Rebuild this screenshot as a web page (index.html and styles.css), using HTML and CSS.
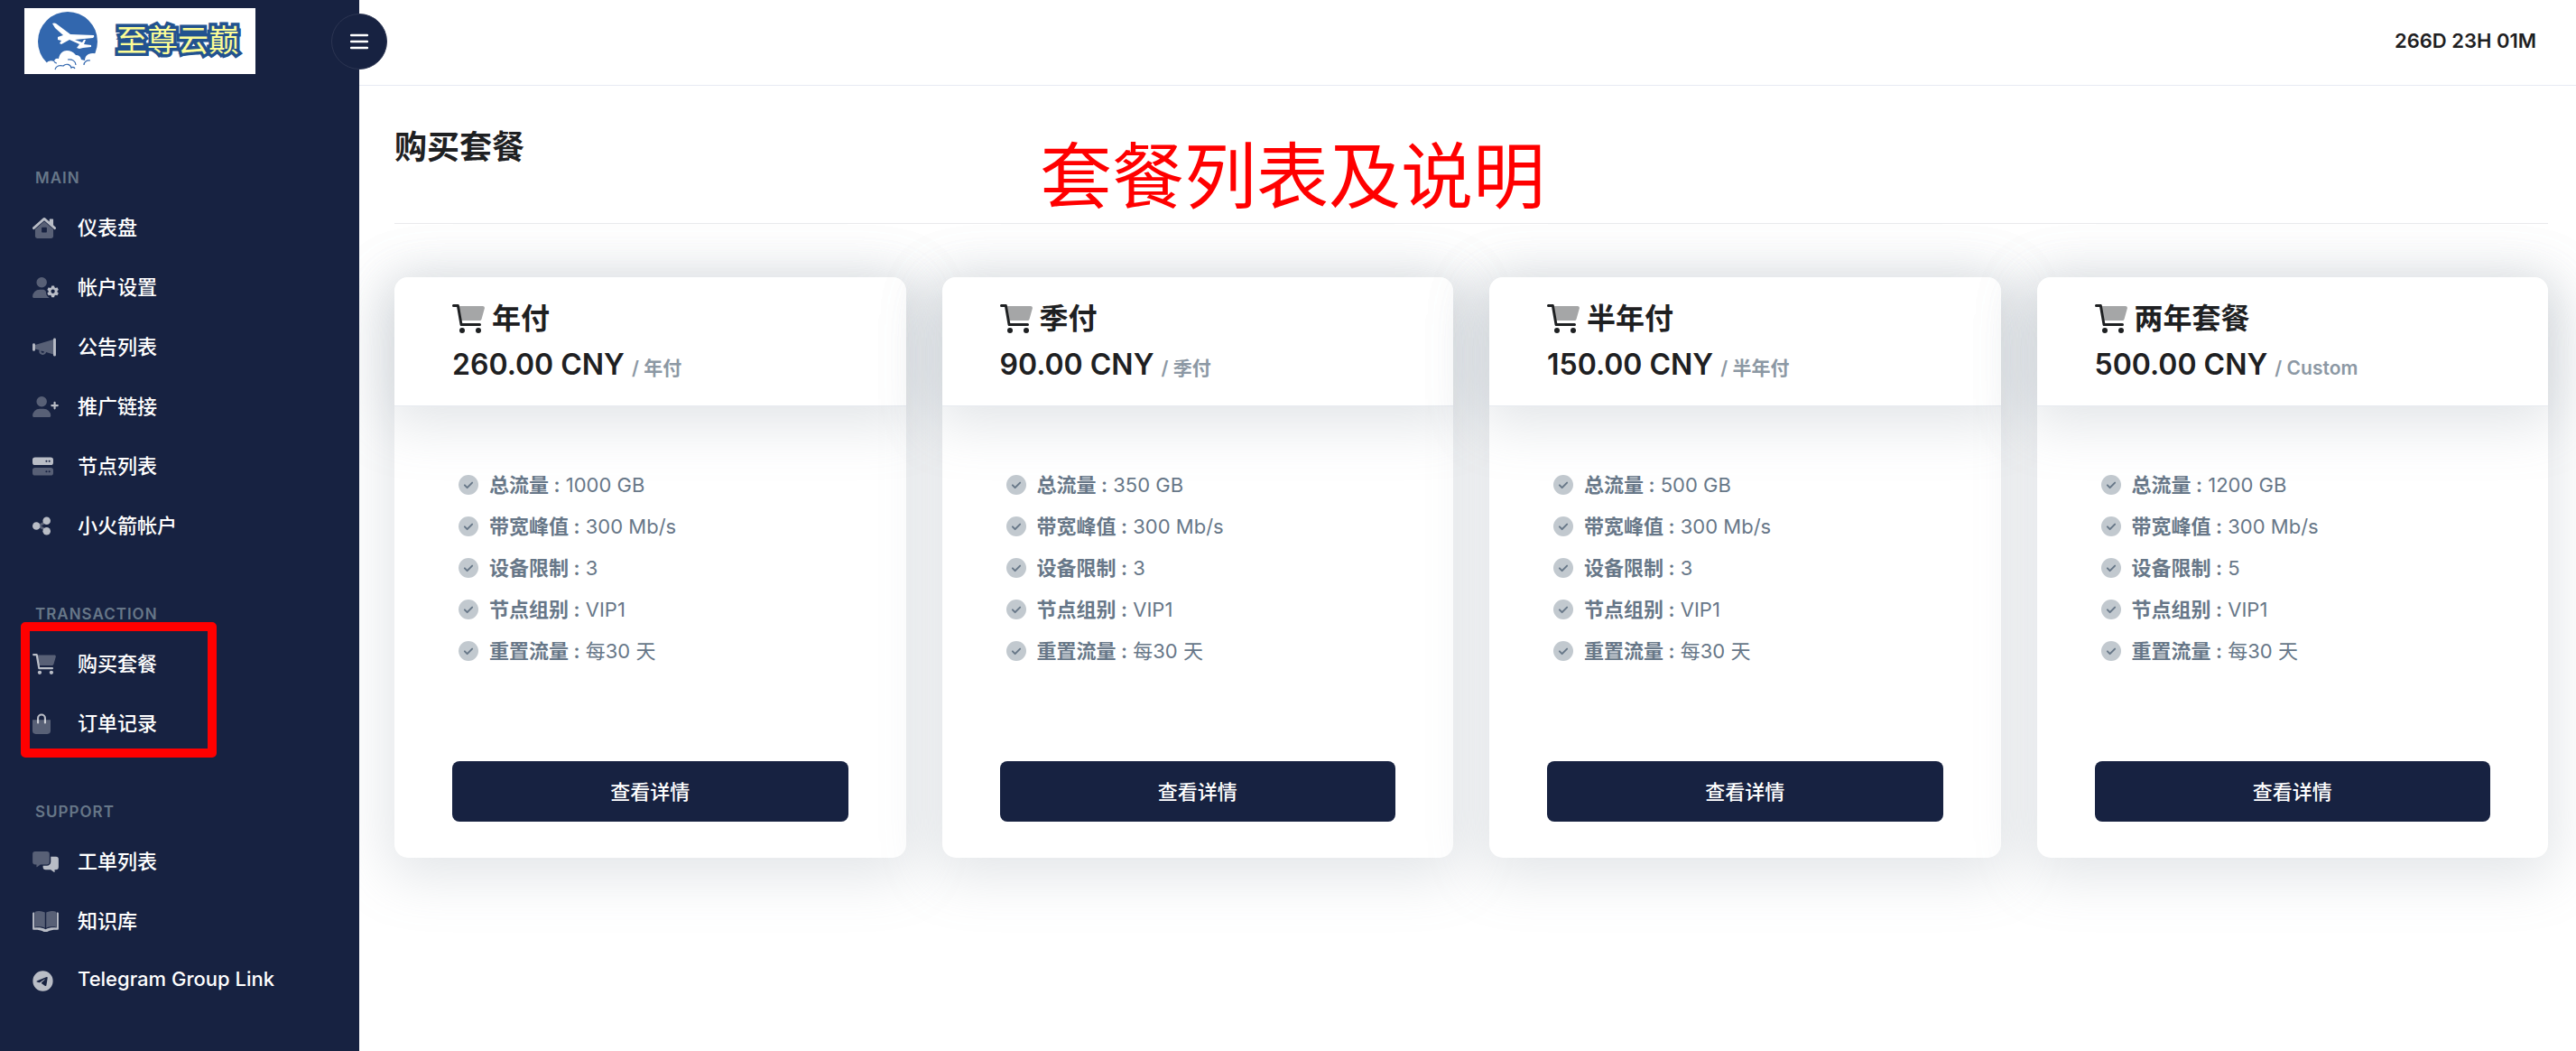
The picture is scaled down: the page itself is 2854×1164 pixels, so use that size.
FILE: index.html
```html
<!DOCTYPE html>
<html lang="zh-CN">
<head>
    <meta charset="UTF-8">
    <meta name="viewport" content="width=device-width, initial-scale=1.0">
    <title>购买套餐</title>
    <link rel="stylesheet" href="styles.css">
</head>
<body>
    <!-- Icon sprite -->
    <svg class="sprite" aria-hidden="true">
        <symbol id="i-home" viewBox="0 0 576 512">
            <path opacity=".4" fill-rule="evenodd" d="M64 290 288 96l224 194v174a48 48 0 0 1-48 48H112a48 48 0 0 1-48-48zM224 256v96a16 16 0 0 0 16 16h96a16 16 0 0 0 16-16v-96a16 16 0 0 0-16-16h-96a16 16 0 0 0-16 16z"/>
            <path d="M512 185V48a16 16 0 0 0-16-16h-64a16 16 0 0 0-16 16v52L309 8a32 32 0 0 0-42 0L11 232a32 32 0 1 0 42 48L288 75l235 205a32 32 0 1 0 42-48z"/>
        </symbol>
        <symbol id="i-user-gear" viewBox="0 0 640 512">
            <path opacity=".4" d="M224 256a128 128 0 1 0 0-256 128 128 0 0 0 0 256zM325 345a110 110 0 0 0-52-41h-98A174 174 0 0 0 0 478c0 19 15 34 34 34h380a190 190 0 0 1-75-86z"/>
            <path fill-rule="evenodd" d="m468 210-8 39-29 17-38-13-32 56 30 26v34l-30 26 32 56 38-13 29 17 8 39h65l8-39 29-17 38 13 32-56-30-26v-34l30-26-32-56-38 13-29-17-8-39zm32 92a48 48 0 1 1 0 96 48 48 0 0 1 0-96z"/>
        </symbol>
        <symbol id="i-horn" viewBox="0 0 576 512">
            <path opacity=".4" fill-rule="evenodd" d="M64 198 512 64v368L337 380a88 88 0 1 1-170-50L64 300zM212 344a40 40 0 1 0 78 22z"/>
            <path d="M544 32a32 32 0 0 0-32 32v384a32 32 0 1 0 64 0V64a32 32 0 0 0-32-32zM32 160a32 32 0 0 0-32 32v128a32 32 0 1 0 64 0V192a32 32 0 0 0-32-32z"/>
        </symbol>
        <symbol id="i-user-plus" viewBox="0 0 640 512">
            <path opacity=".4" d="M224 256a128 128 0 1 0 0-256 128 128 0 0 0 0 256zM273 304h-98A174 174 0 0 0 0 478c0 19 15 34 34 34h380c19 0 34-15 34-34a174 174 0 0 0-175-174z"/>
            <path d="M616 200h-48v-48a24 24 0 1 0-48 0v48h-48a24 24 0 1 0 0 48h48v48a24 24 0 1 0 48 0v-48h48a24 24 0 1 0 0-48z"/>
        </symbol>
        <symbol id="i-server" viewBox="0 0 512 512">
            <path fill-rule="evenodd" d="M64 32h384a64 64 0 0 1 64 64v64a64 64 0 0 1-64 64H64a64 64 0 0 1-64-64V96a64 64 0 0 1 64-64zm280 72a24 24 0 1 0 0 48 24 24 0 0 0 0-48zm72 0a24 24 0 1 0 0 48 24 24 0 0 0 0-48z"/>
            <path opacity=".4" fill-rule="evenodd" d="M64 288h384a64 64 0 0 1 64 64v64a64 64 0 0 1-64 64H64a64 64 0 0 1-64-64v-64a64 64 0 0 1 64-64zm280 72a24 24 0 1 0 0 48 24 24 0 0 0 0-48zm72 0a24 24 0 1 0 0 48 24 24 0 0 0 0-48z"/>
        </symbol>
        <symbol id="i-share" viewBox="0 0 448 512">
            <path opacity=".4" d="m176 203 94-47 28 57-94 47zM204 252l94 47-28 57-94-47z"/>
            <circle cx="96" cy="256" r="96"/>
            <circle cx="352" cy="128" r="96"/>
            <circle cx="352" cy="384" r="96"/>
        </symbol>
        <symbol id="i-cart" viewBox="0 0 576 512">
            <path opacity=".4" d="M110 32h432c20 0 37 19 32 40l-54 192a32 32 0 0 1-31 24H159z"/>
            <path d="M0 24C0 11 11 0 24 0h78c11 0 21 8 23 19l55 317h308a24 24 0 1 1 0 48H160c-11 0-21-8-23-20L82 48H24A24 24 0 0 1 0 24z"/>
            <circle cx="176" cy="464" r="48"/>
            <circle cx="464" cy="464" r="48"/>
        </symbol>
        <symbol id="i-bag" viewBox="0 0 448 512">
            <path opacity=".4" d="M0 160h448v272a80 80 0 0 1-80 80H80a80 80 0 0 1-80-80z"/>
            <path d="M112 232v-112a112 112 0 0 1 224 0v112a24 24 0 0 1-48 0v-112a64 64 0 0 0-128 0v112a24 24 0 0 1-48 0z"/>
        </symbol>
        <symbol id="i-comments" viewBox="0 0 640 512">
            <path opacity=".4" d="M352 0H64a64 64 0 0 0-64 64v192a64 64 0 0 0 64 64h32v56c0 7 8 11 13 7l85-63h158a64 64 0 0 0 64-64V64a64 64 0 0 0-64-64z"/>
            <path d="M576 128H448v128a96 96 0 0 1-96 96h-96v32a64 64 0 0 0 64 64h126l85 63c6 4 13 0 13-7v-56h32a64 64 0 0 0 64-64V192a64 64 0 0 0-64-64z"/>
        </symbol>
        <symbol id="i-book" viewBox="0 0 640 512">
            <path opacity=".4" d="M64 18C130-12 220-4 304 34v382c-70-32-160-40-240-22zM576 18C510-12 420-4 336 34v382c70-32 160-40 240-22z"/>
            <path d="M24 32h24v378c90-14 190-6 272 38 82-44 182-52 272-38V32h24a24 24 0 0 1 24 24v382c0 16-12 28-30 26-90-4-160 4-240 42-28 14-72 14-100 0-80-38-150-46-240-42-18 2-30-10-30-26V56a24 24 0 0 1 24-24z"/>
        </symbol>
        <symbol id="i-telegram" viewBox="0 0 496 512">
            <path fill-rule="evenodd" d="M248 8a248 248 0 1 0 0 496 248 248 0 0 0 0-496zm115 169c-4 39-20 134-28 178-4 19-10 25-17 25-14 2-25-9-39-18-22-14-34-23-55-37-25-16-9-25 5-40 4-4 68-62 69-67 0-1 0-3-1-4s-3-1-5-1q-3 1-106 70-15 10-27 10c-9 0-26-5-39-9-16-5-28-8-27-17q1-7 18-14 109-47 145-62c69-29 84-34 93-34 2 0 7 1 10 3 3 3 4 8 4 17z"/>
        </symbol>
        <symbol id="i-check" viewBox="0 0 512 512">
            <circle opacity=".4" cx="256" cy="256" r="256"/>
            <path fill="none" stroke="currentColor" stroke-width="46" stroke-linecap="round" stroke-linejoin="round" d="m160 264 64 64 128-128"/>
        </symbol>
    </svg>

    <div class="layout">
        <aside class="sidebar">
            <a class="brand" href="#" aria-label="至尊云巅">
                <svg class="brand-mark" viewBox="0 0 68 68" aria-hidden="true">
                    <circle cx="34" cy="34" r="33" fill="#3267ae"/>
                    <path fill="#fff" d="M17 14q2-1 4 0l16 12 26 1q1 2-1 3l-20 2 8 3 2-3h2l-2 5 8 1v2l-9 1-4 1-3-1 3-4-11-5-9 5-2-1 2-3-4-1v-3l6-2-9-8z"/>
                    <path fill="#fff" d="M4 68 10 58q3-4 9-2 1-4 5-3c1-6 5-9 9-9q6 0 10 5 5 0 6 5l4 1q0-5 4-7 5-2 10 0v20z"/>
                    <path fill="none" stroke="#3267ae" stroke-width="1.2" d="M20 65c1-4 5-5 9-4 3-3 8-2 9 2 1-1 3-1 4 1M34 54c5-1 9 2 9 6M52 60c0-3 3-6 7-5M19 56q1 2 3 2"/>
                </svg>
                <span class="brand-name">至尊云巅</span>
            </a>
            <button class="toggle" type="button" aria-label="Menu">
                <svg viewBox="0 0 20 18" aria-hidden="true"><path d="M1 2h18M1 9h18M1 16h18"/></svg>
            </button>

            <nav class="menu">
                <section class="menu-group">
                    <h2>MAIN</h2>
                    <a href="#"><svg class="w576"><use href="#i-home"/></svg><span>仪表盘</span></a>
                    <a href="#"><svg class="w640"><use href="#i-user-gear"/></svg><span>帐户设置</span></a>
                    <a href="#"><svg class="w576"><use href="#i-horn"/></svg><span>公告列表</span></a>
                    <a href="#"><svg class="w640"><use href="#i-user-plus"/></svg><span>推广链接</span></a>
                    <a href="#"><svg class="w512"><use href="#i-server"/></svg><span>节点列表</span></a>
                    <a href="#"><svg class="w448"><use href="#i-share"/></svg><span>小火箭帐户</span></a>
                </section>
                <section class="menu-group">
                    <h2>TRANSACTION</h2>
                    <a href="#"><svg class="w576"><use href="#i-cart"/></svg><span>购买套餐</span></a>
                    <a href="#"><svg class="w448"><use href="#i-bag"/></svg><span>订单记录</span></a>
                    <div class="marker"></div>
                </section>
                <section class="menu-group">
                    <h2>SUPPORT</h2>
                    <a href="#"><svg class="w640"><use href="#i-comments"/></svg><span>工单列表</span></a>
                    <a href="#"><svg class="w640"><use href="#i-book"/></svg><span>知识库</span></a>
                    <a href="#"><svg class="w512"><use href="#i-telegram"/></svg><span>Telegram Group Link</span></a>
                </section>
            </nav>
        </aside>

        <div class="page">
            <header class="topbar">266D 23H 01M</header>
            <main class="content">
                <div class="page-title">
                    <h1>购买套餐</h1>
                    <p class="note">套餐列表及说明</p>
                </div>

                <div class="plans">
                    <article class="plan">
                        <header class="plan-header">
                            <h3><svg><use href="#i-cart"/></svg>年付</h3>
                            <p>260.00 CNY <small>/ 年付</small></p>
                        </header>
                        <div class="plan-body">
                            <ul>
                                <li><svg><use href="#i-check"/></svg><span><b>总流量 :</b> 1000 GB</span></li>
                                <li><svg><use href="#i-check"/></svg><span><b>带宽峰值 :</b> 300 Mb/s</span></li>
                                <li><svg><use href="#i-check"/></svg><span><b>设备限制 :</b> 3</span></li>
                                <li><svg><use href="#i-check"/></svg><span><b>节点组别 :</b> VIP1</span></li>
                                <li><svg><use href="#i-check"/></svg><span><b>重置流量 :</b> 每30 天</span></li>
                            </ul>
                            <button type="button">查看详情</button>
                        </div>
                    </article>

                    <article class="plan">
                        <header class="plan-header">
                            <h3><svg><use href="#i-cart"/></svg>季付</h3>
                            <p>90.00 CNY <small>/ 季付</small></p>
                        </header>
                        <div class="plan-body">
                            <ul>
                                <li><svg><use href="#i-check"/></svg><span><b>总流量 :</b> 350 GB</span></li>
                                <li><svg><use href="#i-check"/></svg><span><b>带宽峰值 :</b> 300 Mb/s</span></li>
                                <li><svg><use href="#i-check"/></svg><span><b>设备限制 :</b> 3</span></li>
                                <li><svg><use href="#i-check"/></svg><span><b>节点组别 :</b> VIP1</span></li>
                                <li><svg><use href="#i-check"/></svg><span><b>重置流量 :</b> 每30 天</span></li>
                            </ul>
                            <button type="button">查看详情</button>
                        </div>
                    </article>

                    <article class="plan">
                        <header class="plan-header">
                            <h3><svg><use href="#i-cart"/></svg>半年付</h3>
                            <p>150.00 CNY <small>/ 半年付</small></p>
                        </header>
                        <div class="plan-body">
                            <ul>
                                <li><svg><use href="#i-check"/></svg><span><b>总流量 :</b> 500 GB</span></li>
                                <li><svg><use href="#i-check"/></svg><span><b>带宽峰值 :</b> 300 Mb/s</span></li>
                                <li><svg><use href="#i-check"/></svg><span><b>设备限制 :</b> 3</span></li>
                                <li><svg><use href="#i-check"/></svg><span><b>节点组别 :</b> VIP1</span></li>
                                <li><svg><use href="#i-check"/></svg><span><b>重置流量 :</b> 每30 天</span></li>
                            </ul>
                            <button type="button">查看详情</button>
                        </div>
                    </article>

                    <article class="plan">
                        <header class="plan-header">
                            <h3><svg><use href="#i-cart"/></svg>两年套餐</h3>
                            <p>500.00 CNY <small>/ Custom</small></p>
                        </header>
                        <div class="plan-body">
                            <ul>
                                <li><svg><use href="#i-check"/></svg><span><b>总流量 :</b> 1200 GB</span></li>
                                <li><svg><use href="#i-check"/></svg><span><b>带宽峰值 :</b> 300 Mb/s</span></li>
                                <li><svg><use href="#i-check"/></svg><span><b>设备限制 :</b> 5</span></li>
                                <li><svg><use href="#i-check"/></svg><span><b>节点组别 :</b> VIP1</span></li>
                                <li><svg><use href="#i-check"/></svg><span><b>重置流量 :</b> 每30 天</span></li>
                            </ul>
                            <button type="button">查看详情</button>
                        </div>
                    </article>
                </div>
            </main>
        </div>
    </div>
</body>
</html>
```
FILE: styles.css
```css
* {
    box-sizing: border-box;
}
body {
    margin: 0;
    font-family: Inter, "Noto Sans CJK SC", sans-serif;
    font-size: 22px;
    color: #1e2022;
    background-color: #fff;
}
h1, h2, h3, p, ul {
    margin: 0;
    padding: 0;
}
svg {
    fill: currentColor;
}
.sprite {
    position: absolute;
    width: 0;
    height: 0;
}
.layout {
    display: flex;
    min-height: 100vh;
}

/* Sidebar */
.sidebar {
    position: relative;
    z-index: 1;
    flex: 0 0 398px;
    padding: 9px 0 0 27px;
    background-color: #172241;
}
.brand {
    display: flex;
    align-items: center;
    gap: 20px;
    width: 256px;
    height: 73px;
    padding-left: 14px;
    background-color: #fff;
    text-decoration: none;
}
.brand-mark {
    width: 68px;
    height: 68px;
}
.brand-name {
    padding-bottom: 2px;
    font-size: 34px;
    line-height: 40px;
    color: #fdfd96;
    -webkit-text-stroke: 7px #22528f;
    paint-order: stroke fill;
}
.toggle {
    position: absolute;
    top: 15px;
    right: -31px;
    display: flex;
    align-items: center;
    justify-content: center;
    width: 62px;
    height: 62px;
    padding: 0;
    border: 1px solid #2c3552;
    border-radius: 50%;
    background-color: #172241;
    color: #fff;
    cursor: pointer;
}
.toggle svg {
    width: 20px;
    height: 18px;
    stroke: currentColor;
    stroke-width: 2.4;
    stroke-linecap: round;
}
.menu {
    padding-top: 93px;
}
.menu-group {
    position: relative;
    margin-bottom: 43px;
}
.menu-group h2 {
    padding-left: 12px;
    font-size: 17px;
    font-weight: 600;
    line-height: 44px;
    letter-spacing: 1px;
    color: #677788;
}
.menu-group a {
    display: flex;
    align-items: center;
    height: 66px;
    padding-left: 9px;
    font-weight: 500;
    color: #fff;
    text-decoration: none;
}
.menu-group a svg {
    height: 23px;
    color: rgba(255, 255, 255, 0.7);
}
.menu-group a span {
    flex: 1;
    padding-bottom: 4px;
}
.w448 {
    width: 20px;
    margin-right: 30px;
}
.w512 {
    width: 23px;
    margin-right: 27px;
}
.w576 {
    width: 26px;
    margin-right: 24px;
}
.w640 {
    width: 29px;
    margin-right: 21px;
}
/* Red frame over the purchase links */
.marker {
    position: absolute;
    top: 31px;
    left: -4px;
    width: 217px;
    height: 150px;
    border: 10px solid #f00;
    border-radius: 5px;
    pointer-events: none;
}

/* Main area */
.page {
    flex: 1;
    min-width: 0;
}
.topbar {
    height: 95px;
    padding-right: 44px;
    border-bottom: 1px solid #e7eaf3;
    font-weight: 600;
    line-height: 90px;
    text-align: right;
}
.content {
    padding: 42px 31px 40px 39px;
}
.page-title {
    position: relative;
    height: 111px;
    margin-bottom: 59px;
    border-bottom: 1px solid #e9eaec;
}
.page-title h1 {
    font-size: 36px;
    font-weight: 700;
    line-height: 52px;
}
.note {
    position: absolute;
    top: 0;
    left: 715px;
    font-size: 80px;
    line-height: 116px;
    white-space: nowrap;
    color: #f00;
}
.plans {
    display: grid;
    grid-template-columns: repeat(4, 1fr);
    gap: 40px;
}
.plan {
    position: relative;
    border-radius: 15px;
    background-color: #fff;
    box-shadow: 0 12px 60px 8px rgba(140, 152, 164, 0.25);
}
.plan-header {
    padding: 21px 64px 19px;
    border-bottom: 1px solid #e7eaf0;
    border-radius: 15px 15px 0 0;
    background-color: #fff;
    box-shadow: 0 12px 60px 8px rgba(140, 152, 164, 0.25);
}
.plan-header h3 {
    display: flex;
    align-items: center;
    gap: 8px;
    font-size: 32px;
    font-weight: 600;
    line-height: 50px;
}
.plan-header h3 svg {
    width: 36px;
    height: 32px;
}
.plan-header p {
    font-size: 32px;
    font-weight: 600;
    line-height: 52px;
}
.plan-header small {
    font-size: 21px;
    line-height: 1;
    color: #8c98a4;
}
.plan-body {
    padding: 64px 64px 40px;
}
.plan-body ul {
    margin-bottom: 99px;
    padding-left: 7px;
    list-style: none;
    color: #677788;
}
.plan-body li {
    display: flex;
    align-items: center;
    gap: 12px;
    height: 46px;
}
.plan-body li svg {
    width: 22px;
    height: 22px;
}
.plan-body li span {
    padding-bottom: 4px;
}
.plan-body b {
    font-weight: 600;
}
.plan-body button {
    display: block;
    width: 100%;
    height: 67px;
    padding: 0 0 4px;
    border: 0;
    border-radius: 8px;
    background-color: #172241;
    font: inherit;
    font-weight: 500;
    color: #fff;
    cursor: pointer;
}
```
